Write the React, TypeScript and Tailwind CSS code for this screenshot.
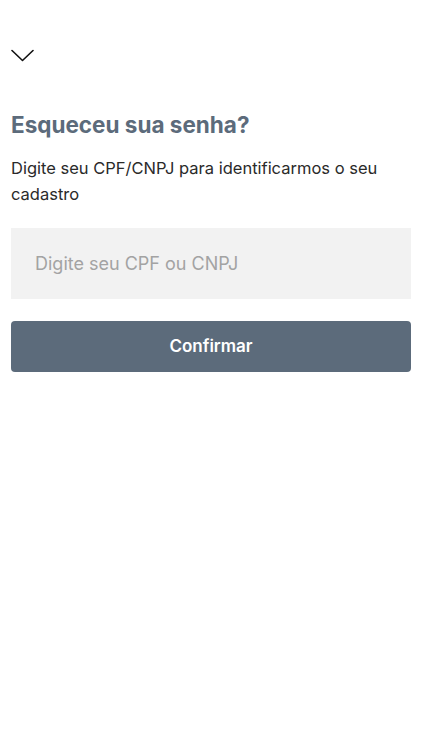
export default function App() {
  return (
    <div className="min-h-[750px] w-[422px] bg-white px-[11px] font-['Inter',sans-serif]">
      <div className="pt-[49px]">
        <svg width="23" height="13" viewBox="0 0 23 13" fill="none">
          <path d="M1 1.5 L11.5 11.5 L22 1.5" stroke="#111" strokeWidth="1.6" strokeLinecap="round" strokeLinejoin="round" />
        </svg>
      </div>
      <h1 className="mt-[49px] text-[22.5px] font-bold leading-[28px] text-[#5c6b7b]">Esqueceu sua senha?</h1>
      <p className="mt-[16px] text-[16.5px] leading-[26px] text-[#2a2a2a]">
        Digite seu CPF/CNPJ para identificarmos o seu cadastro
      </p>
      <div className="mt-[21px] flex h-[71px] items-center bg-[#f2f2f2] px-[24px]">
        <input
          className="w-full bg-transparent text-[18px] text-[#333] outline-none placeholder:text-[#a3a3a3]"
          placeholder="Digite seu CPF ou CNPJ"
        />
      </div>
      <button className="mt-[22px] flex h-[51px] w-full items-center justify-center rounded-[4px] bg-[#5c6b7b] text-[17px] font-semibold text-white">
        Confirmar
      </button>
    </div>
  );
}
